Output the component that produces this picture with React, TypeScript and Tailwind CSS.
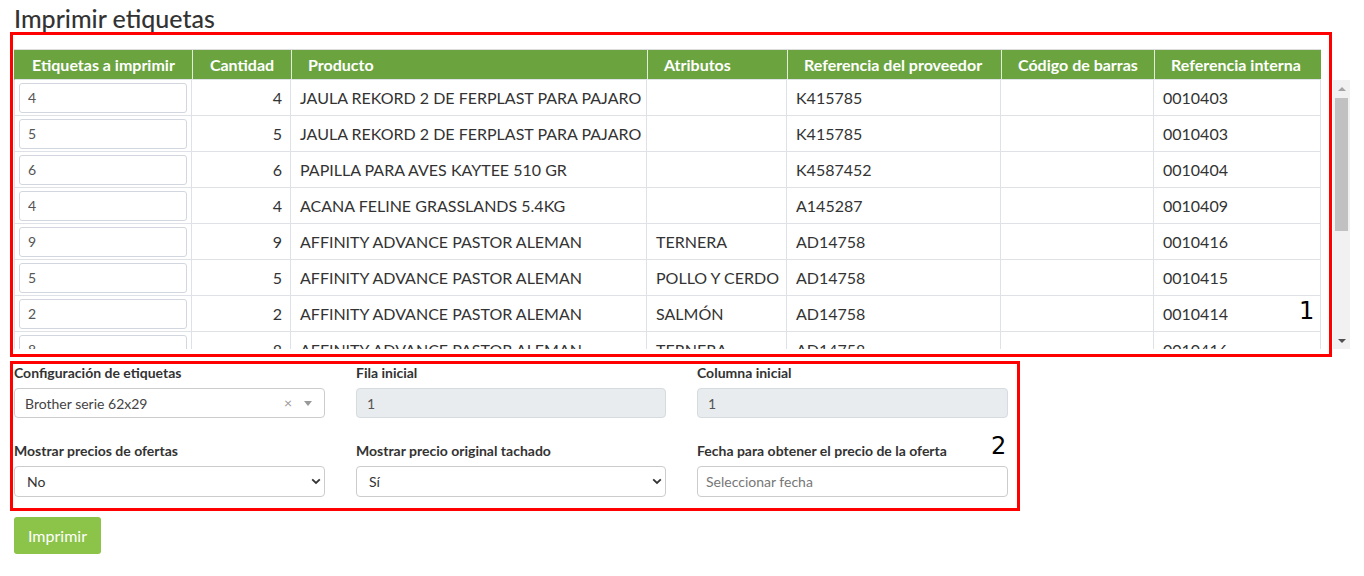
import React from 'react';

type Row = [number, string, string, string, string];

const rows: Row[] = [
  [4, 'JAULA REKORD 2 DE FERPLAST PARA PAJARO', '', 'K415785', '0010403'],
  [5, 'JAULA REKORD 2 DE FERPLAST PARA PAJARO', '', 'K415785', '0010403'],
  [6, 'PAPILLA PARA AVES KAYTEE 510 GR', '', 'K4587452', '0010404'],
  [4, 'ACANA FELINE GRASSLANDS 5.4KG', '', 'A145287', '0010409'],
  [9, 'AFFINITY ADVANCE PASTOR ALEMAN', 'TERNERA', 'AD14758', '0010416'],
  [5, 'AFFINITY ADVANCE PASTOR ALEMAN', 'POLLO Y CERDO', 'AD14758', '0010415'],
  [2, 'AFFINITY ADVANCE PASTOR ALEMAN', 'SALMÓN', 'AD14758', '0010414'],
  [8, 'AFFINITY ADVANCE PASTOR ALEMAN', 'TERNERA', 'AD14758', '0010416'],
  [3, 'AFFINITY ADVANCE PASTOR ALEMAN', 'POLLO Y CERDO', 'AD14758', '0010415'],
  [1, 'AFFINITY ADVANCE PASTOR ALEMAN', 'SALMÓN', 'AD14758', '0010414'],
];

function Cols() {
  return (
    <colgroup>
      <col className="w-[178px]" />
      <col className="w-[99px]" />
      <col className="w-[356px]" />
      <col className="w-[140px]" />
      <col className="w-[214px]" />
      <col className="w-[153px]" />
      <col className="w-[167px]" />
    </colgroup>
  );
}

function Chevron() {
  return (
    <svg width="10" height="7" viewBox="0 0 10 7" className="shrink-0">
      <path d="M1.2 1.3 L5 5 L8.8 1.3" fill="none" stroke="#333" strokeWidth="1.8" />
    </svg>
  );
}

const thBase = 'h-[30px] px-[16px] font-bold text-[16px] text-white border-b border-[#dfe3e8] whitespace-nowrap';
const tdBase = 'h-[36px] border-r border-b border-[#dee2e6] text-[16px] text-[#333] whitespace-nowrap align-middle';

export default function App() {
  return (
    <div className="relative w-[1364px] h-[576px] bg-white font-['Lato',sans-serif] text-[#333] overflow-hidden">
      <div className="pl-[14px] pt-[4px]">
        <h1 className="text-[25px] leading-[29px] font-medium text-[#333]">Imprimir etiquetas</h1>

        <div className="mt-[16px]">
          <table className="w-[1307px] table-fixed border-separate border-spacing-0 border-t border-[#dcdcdc]">
            <Cols />
            <thead>
              <tr className="bg-[#6ba43f]">
                <th className={`${thBase} text-center border-l border-l-[#6ba43f]`}>Etiquetas a imprimir</th>
                <th className={`${thBase} text-center border-l border-l-[#e4ecdc]`}>Cantidad</th>
                <th className={`${thBase} text-left border-l border-l-[#e4ecdc]`}>Producto</th>
                <th className={`${thBase} text-left border-l border-l-[#e4ecdc]`}>Atributos</th>
                <th className={`${thBase} text-left border-l border-l-[#e4ecdc]`}>Referencia del proveedor</th>
                <th className={`${thBase} text-left border-l border-l-[#e4ecdc]`}>Código de barras</th>
                <th className={`${thBase} text-left border-l border-l-[#e4ecdc]`}>Referencia interna</th>
              </tr>
            </thead>
          </table>

          <div className="flex">
            <div className="w-[1319px] h-[269px] overflow-hidden">
              <table className="w-[1307px] table-fixed border-separate border-spacing-0">
                <Cols />
                <tbody>
                  {rows.map((r, i) => (
                    <tr key={i}>
                      <td className={`${tdBase} border-l px-[4px]`}>
                        <input
                          defaultValue={String(r[0])}
                          className="block w-[168px] h-[30px] border border-[#d2d6de] rounded-[3px] px-[8px] text-[14px] text-[#555] outline-none font-['Lato',sans-serif]"
                        />
                      </td>
                      <td className={`${tdBase} text-right pr-[8px]`}>{r[0]}</td>
                      <td className={`${tdBase} pl-[9px]`}>{r[1]}</td>
                      <td className={`${tdBase} pl-[9px]`}>{r[2]}</td>
                      <td className={`${tdBase} pl-[9px]`}>{r[3]}</td>
                      <td className={`${tdBase} pl-[9px]`}></td>
                      <td className={`${tdBase} pl-[9px]`}>{r[4]}</td>
                    </tr>
                  ))}
                </tbody>
              </table>
            </div>
            <div className="w-[17px] h-[269px] bg-[#f1f1f1] flex flex-col items-center">
              <div className="h-[17px] w-full flex items-center justify-center">
                <div className="w-0 h-0 border-x-[4px] border-x-transparent border-b-[4px] border-b-[#a3a3a3]" />
              </div>
              <div className="mt-[1px] w-[13px] h-[133px] bg-[#c1c1c1]" />
              <div className="flex-1" />
              <div className="h-[17px] w-full flex items-center justify-center">
                <div className="w-0 h-0 border-x-[4px] border-x-transparent border-t-[4px] border-t-[#505050]" />
              </div>
            </div>
          </div>
        </div>

        <div className="mt-[15px] grid grid-cols-[311px_310px_311px] gap-x-[31px] gap-y-[24px] text-[14px]">
          <div>
            <div className="font-bold leading-[18px] mb-[6px] text-[#333]">Configuración de etiquetas</div>
            <div className="h-[30px] border border-[#cccccc] rounded-[4px] bg-white flex items-center pl-[10px] pr-[12px] text-[#444]">
              <span className="flex-1">Brother serie 62x29</span>
              <span className="text-[#999] text-[14px] mr-[12px] leading-none">×</span>
              <div className="w-0 h-0 border-x-[4px] border-x-transparent border-t-[5px] border-t-[#999]" />
            </div>
          </div>
          <div>
            <div className="font-bold leading-[18px] mb-[6px] text-[#333]">Fila inicial</div>
            <div className="h-[30px] border border-[#d6dbe0] rounded-[4px] bg-[#e9ecef] flex items-center px-[10px] text-[#555]">1</div>
          </div>
          <div>
            <div className="font-bold leading-[18px] mb-[6px] text-[#333]">Columna inicial</div>
            <div className="h-[30px] border border-[#d6dbe0] rounded-[4px] bg-[#e9ecef] flex items-center px-[10px] text-[#555]">1</div>
          </div>
          <div>
            <div className="font-bold leading-[18px] mb-[6px] text-[#333]">Mostrar precios de ofertas</div>
            <div className="h-[31px] border border-[#cccccc] rounded-[4px] bg-white flex items-center pl-[12px] pr-[3px] text-[#333]">
              <span className="flex-1">No</span>
              <Chevron />
            </div>
          </div>
          <div>
            <div className="font-bold leading-[18px] mb-[6px] text-[#333]">Mostrar precio original tachado</div>
            <div className="h-[31px] border border-[#cccccc] rounded-[4px] bg-white flex items-center pl-[12px] pr-[3px] text-[#333]">
              <span className="flex-1">Sí</span>
              <Chevron />
            </div>
          </div>
          <div>
            <div className="font-bold leading-[18px] mb-[6px] text-[#333]">Fecha para obtener el precio de la oferta</div>
            <input
              placeholder="Seleccionar fecha"
              className="block w-full h-[31px] border border-[#cccccc] rounded-[4px] bg-white px-[8px] text-[14px] text-[#555] placeholder:text-[#777] outline-none font-['Lato',sans-serif]"
            />
          </div>
        </div>

        <button className="mt-[20px] h-[37px] px-[14px] rounded-[3px] bg-[#8cc349] text-white text-[16px] font-['Lato',sans-serif]">
          Imprimir
        </button>
      </div>

      {/* annotation overlays */}
      <div className="absolute left-[10px] top-[32px] w-[1322px] h-[325px] border-[3px] border-[#ff0000] pointer-events-none" />
      <div className="absolute left-[10px] top-[361px] w-[1010px] h-[150px] border-[3px] border-[#ff0000] pointer-events-none" />
      <div className="absolute left-[1299px] top-[299px] font-['DejaVu_Sans',sans-serif] text-[24px] leading-none text-black">1</div>
      <div className="absolute left-[991px] top-[434px] font-['DejaVu_Sans',sans-serif] text-[24px] leading-none text-black">2</div>
    </div>
  );
}
